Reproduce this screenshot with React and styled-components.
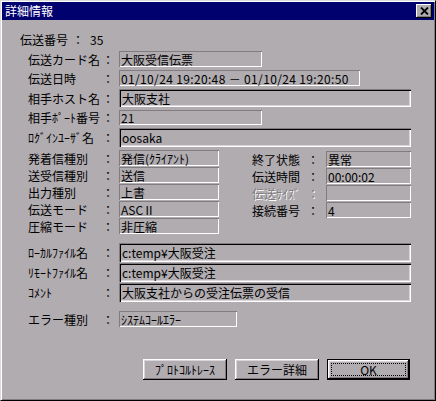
import styled, { createGlobalStyle } from "styled-components";

const GlobalStyle = createGlobalStyle`
    body{
        margin: 0;
        background: #B0ACB0;
        font-family: "Noto Sans CJK JP", "Noto Sans", sans-serif;
    }
`;

const labelWidths = { left: 74, right: 55 };

export default function App(){

    return(
        <>
            <GlobalStyle/>
            <Window>
                <TitleBar>
                    <Title>詳細情報</Title>
                    <CloseButton>
                        <svg width="9" height="8" viewBox="0 0 9 8">
                            <path d="M1 0.5 L8 7.5 M8 0.5 L1 7.5" stroke="#000" strokeWidth="1.8" fill="none"/>
                        </svg>
                    </CloseButton>
                </TitleBar>

                <Body>
                    <NumberRow>
                        <span>伝送番号</span>
                        <Colon $w={18}>：</Colon>
                        <span>35</span>
                    </NumberRow>

                    <Stack $gap={3} $mt={4}>
                        <Row $h={16}>
                            <Label $w={labelWidths.left}>伝送カード名</Label>
                            <Colon $w={17}>：</Colon>
                            <Field $w={143}>大阪受信伝票</Field>
                        </Row>
                        <Row $h={16}>
                            <Label $w={labelWidths.left}>伝送日時</Label>
                            <Colon $w={17}>：</Colon>
                            <Field $w={241} $spaced>01/10/24 19:20:48 － 01/10/24 19:20:50</Field>
                        </Row>
                        <Row $h={18}>
                            <Label $w={labelWidths.left}>相手ホスト名</Label>
                            <Colon $w={17}>：</Colon>
                            <Field $w={292} $deep>大阪支社</Field>
                        </Row>
                        <Row $h={15}>
                            <Label $w={labelWidths.left}>相手ﾎﾟｰﾄ番号</Label>
                            <Colon $w={17}>：</Colon>
                            <Field $w={143}>21</Field>
                        </Row>
                        <Row $h={19}>
                            <Label $w={labelWidths.left}>ﾛｸﾞｲﾝﾕｰｻﾞ名</Label>
                            <Colon $w={17}>：</Colon>
                            <Field $w={292} $deep>oosaka</Field>
                        </Row>
                    </Stack>

                    <Columns>
                        <Stack $gap={1}>
                            {[
                                ["発着信種別", "発信(ｸﾗｲｱﾝﾄ)"],
                                ["送受信種別", "送信"],
                                ["出力種別", "上書"],
                                ["伝送モード", "ASCⅡ"],
                                ["圧縮モード", "非圧縮"]
                            ].map(([label, value]) => (
                                <Row $h={16} key={label}>
                                    <Label $w={labelWidths.left}>{label}</Label>
                                    <Colon $w={17}>：</Colon>
                                    <Field $w={100}>{value}</Field>
                                </Row>
                            ))}
                        </Stack>
                        <Stack $gap={1} $mt={1}>
                            {[
                                ["終了状態", "異常", false],
                                ["伝送時間", "00:00:02", false],
                                ["伝送ｻｲｽﾞ", "", true],
                                ["接続番号", "4", false]
                            ].map(([label, value, disabled]) => (
                                <Row $h={16} key={label}>
                                    <Label $w={labelWidths.right} $disabled={disabled}>{label}</Label>
                                    <Colon $w={19} $disabled={disabled}>：</Colon>
                                    <Field $w={85}>{value}</Field>
                                </Row>
                            ))}
                        </Stack>
                    </Columns>

                    <Stack $gap={1} $mt={9}>
                        <Row $h={19}>
                            <Label $w={labelWidths.left}>ﾛｰｶﾙﾌｧｲﾙ名</Label>
                            <Colon $w={17}>：</Colon>
                            <Field $w={292} $deep>c:temp¥大阪受注</Field>
                        </Row>
                        <Row $h={19}>
                            <Label $w={labelWidths.left}>ﾘﾓｰﾄﾌｧｲﾙ名</Label>
                            <Colon $w={17}>：</Colon>
                            <Field $w={292} $deep>c:temp¥大阪受注</Field>
                        </Row>
                        <Row $h={19}>
                            <Label $w={labelWidths.left}>ｺﾒﾝﾄ</Label>
                            <Colon $w={17}>：</Colon>
                            <Field $w={292} $deep>大阪支社からの受注伝票の受信</Field>
                        </Row>
                    </Stack>

                    <Stack $mt={9}>
                        <Row $h={16}>
                            <Label $w={labelWidths.left}>エラー種別</Label>
                            <Colon $w={17}>：</Colon>
                            <Field $w={118}>ｼｽﾃﾑｺｰﾙｴﾗｰ</Field>
                        </Row>
                    </Stack>

                    <ButtonRow>
                        <Button $w={84}>ﾌﾟﾛﾄｺﾙﾄﾚｰｽ</Button>
                        <Button $w={84}>エラー詳細</Button>
                        <Button $w={83} $default><Focus>OK</Focus></Button>
                    </ButtonRow>
                </Body>
            </Window>
        </>
    );
}

const Window = styled.div`
    width: 436px;
    height: 401px;
    box-sizing: border-box;
    padding: 1px;

    display: flex;
    flex-direction: column;

    background: #B0ACB0;
    border-top: 1px solid #DCDCDC;
    border-left: 1px solid #DCDCDC;
    border-right: 1px solid #000000;
    border-bottom: 1px solid #000000;
    box-shadow: inset 1px 1px #FFFFFF, inset -1px -1px #807C80;
`;

const TitleBar = styled.div`
    height: 18px;
    padding: 0 2px 0 3px;

    display: flex;
    justify-content: space-between;
    align-items: center;

    background: #00006E;
`;

const Title = styled.span`
    font-size: 12px;
    font-weight: 400;
    color: #FFFFFF;
    line-height: 14px;
`;

const CloseButton = styled.div`
    width: 16px;
    height: 14px;
    box-sizing: border-box;

    display: flex;
    justify-content: center;
    align-items: center;

    background: #B0ACB0;
    box-shadow: inset -1px -1px #000000, inset 1px 1px #FFFFFF, inset -2px -2px #807C80;
`;

const Body = styled.div`
    flex: 1;
    padding: 11px 0 0 18px;

    display: flex;
    flex-direction: column;

    font-size: 12px;
    color: #000000;
`;

const NumberRow = styled.div`
    height: 16px;

    display: flex;
    align-items: center;

    font-size: 12px;

    span:first-child{
        width: 52px;
    }
`;

const Stack = styled.div`
    margin-top: ${p => p.$mt || 0}px;
    padding-left: 8px;

    display: flex;
    flex-direction: column;
    gap: ${p => p.$gap || 0}px;
`;

const Columns = styled.div`
    margin-top: 3px;

    display: flex;
    flex-direction: row;
    gap: 33px;

    & > ${Stack}:last-child{
        padding-left: 0;
    }
`;

const Row = styled.div`
    height: ${p => p.$h}px;

    display: flex;
    flex-direction: row;
    align-items: center;
`;

const Label = styled.span`
    width: ${p => p.$w}px;
    flex-shrink: 0;

    font-size: 12px;
    white-space: nowrap;
    color: ${p => p.$disabled ? "#807C80" : "#000000"};
    text-shadow: ${p => p.$disabled ? "1px 1px 0 #FFFFFF" : "none"};
`;

const Colon = styled.span`
    width: ${p => p.$w}px;
    flex-shrink: 0;

    font-size: 12px;
    color: ${p => p.$disabled ? "#807C80" : "#000000"};
    text-shadow: ${p => p.$disabled ? "1px 1px 0 #FFFFFF" : "none"};
`;

const Field = styled.div`
    width: ${p => p.$w}px;
    height: 100%;
    box-sizing: border-box;
    padding-left: ${p => p.$deep ? 3 : 2}px;

    display: flex;
    align-items: center;

    font-size: 12px;
    letter-spacing: ${p => p.$spaced ? "0.35px" : "0"};
    white-space: pre;
    overflow: hidden;

    background: #B0ACB0;
    box-shadow: ${p => p.$deep
        ? "inset 1px 1px #807C80, inset 2px 2px #000000, inset -1px -1px #FFFFFF, inset -2px -2px #D8D4D8"
        : "inset 1px 1px #807C80, inset -1px -1px #FFFFFF"};
`;

const ButtonRow = styled.div`
    margin-top: 32px;
    padding-right: 24px;

    display: flex;
    justify-content: flex-end;
    gap: 8px;
`;

const Button = styled.button`
    width: ${p => p.$w}px;
    height: 21px;
    padding: 0;
    box-sizing: border-box;

    display: flex;
    justify-content: center;
    align-items: center;

    font-family: "Noto Sans CJK JP", "Noto Sans", sans-serif;
    font-size: 12px;
    color: #000000;

    background: #B0ACB0;
    border: ${p => p.$default ? "1px solid #000000" : "none"};
    box-shadow: inset -1px -1px #000000, inset 1px 1px #FFFFFF, inset -2px -2px #807C80, inset 2px 2px #D8D4D8;
`;

const Focus = styled.span`
    width: calc(100% - 8px);
    height: calc(100% - 8px);

    display: flex;
    justify-content: center;
    align-items: center;

    border: 1px dotted #000000;
    line-height: 1;
`;
